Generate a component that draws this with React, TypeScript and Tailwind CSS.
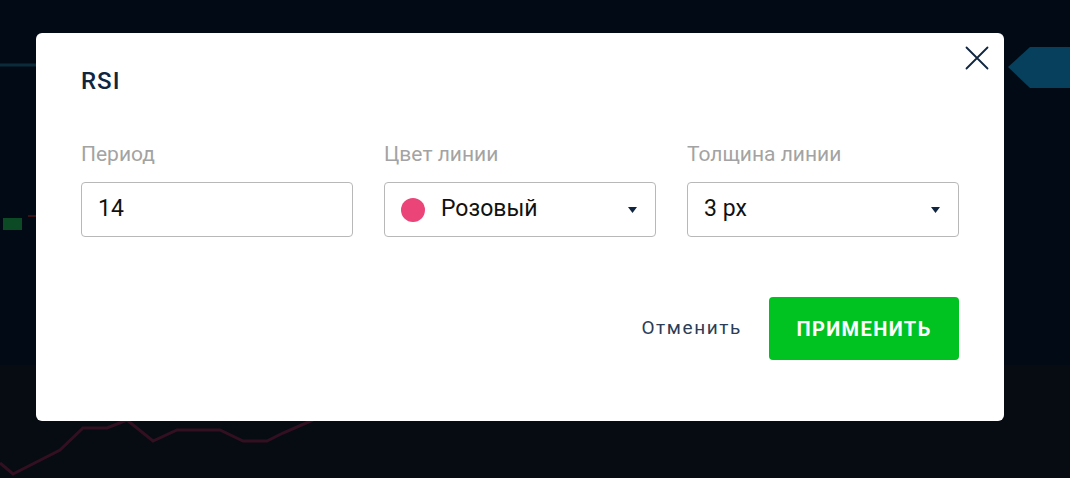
const fields = [
  { label: 'Период', value: '14', select: false, dot: false },
  { label: 'Цвет линии', value: 'Розовый', select: true, dot: true },
  { label: 'Толщина линии', value: '3 px', select: true, dot: false },
];

const Caret = () => (
  <svg width="9" height="6" viewBox="0 0 9 6" className="shrink-0">
    <path d="M0 0 L9 0 L4.5 6 Z" fill="#0f2540" />
  </svg>
);

const CloseIcon = () => (
  <svg width="24" height="24" viewBox="0 0 24 24">
    <path d="M1.5 1.5 L22.5 22.5 M22.5 1.5 L1.5 22.5" stroke="#0f2540" strokeWidth="1.8" strokeLinecap="round" />
  </svg>
);

const ChartBackdrop = () => (
  <svg className="absolute inset-0" width="1070" height="478" viewBox="0 0 1070 478">
    <rect x="0" y="0" width="1070" height="365" fill="#020a15" />
    <rect x="0" y="365" width="1070" height="113" fill="#070b12" />
    <line x1="0" y1="65" x2="40" y2="65" stroke="#0b2b3b" strokeWidth="3" />
    <rect x="3" y="218" width="19" height="12" fill="#0c4a26" />
    <line x1="28" y1="216" x2="40" y2="216" stroke="#3a1218" strokeWidth="2" />
    <path d="M1008 67 L1030 47 L1070 47 L1070 88 L1030 88 Z" fill="#06405c" />
    <polyline
      points="0,463 13,474 60,450 83,428 107,428 127,420 153,441 177,430 220,430 243,441 267,441 283,433 313,420"
      fill="none"
      stroke="#321021"
      strokeWidth="3"
    />
  </svg>
);

export default function App() {
  return (
    <div className="relative w-full h-[478px] overflow-hidden bg-[#020a15] pl-[36px] pt-[33px] font-['Roboto',sans-serif]">
      <ChartBackdrop />
      <div className="relative w-[968px] h-[388px] rounded-md bg-white px-[45px] pt-[33px]">
        <button className="absolute right-[15px] top-[13px]">
          <CloseIcon />
        </button>
        <h2 className="text-[24px] leading-[30px] font-medium tracking-[1px] text-[#0f2540]">RSI</h2>

        <div className="mt-[45px] grid grid-cols-3 gap-[31px]">
          {fields.map((f) => (
            <div key={f.label} className="flex flex-col">
              <span className="text-[21px] leading-[26px] text-[#a3a3a3]">{f.label}</span>
              <div className="mt-[15px] h-[55px] flex items-center rounded border border-[#b8b8b8] pl-[16px] pr-[18px]">
                {f.dot && <span className="mr-[16px] h-[24px] w-[24px] rounded-full bg-[#eb4479]" />}
                <span className="flex-1 text-[23px] text-[#111111]">{f.value}</span>
                {f.select && <Caret />}
              </div>
            </div>
          ))}
        </div>

        <div className="mt-[60px] flex items-center justify-end gap-[27px]">
          <button className="text-[19px] tracking-[1.6px] text-[#2b3d57]">Отменить</button>
          <button className="h-[63px] w-[190px] rounded bg-[#00c322] text-[20px] font-bold tracking-[1.4px] text-white">
            ПРИМЕНИТЬ
          </button>
        </div>
      </div>
    </div>
  );
}
